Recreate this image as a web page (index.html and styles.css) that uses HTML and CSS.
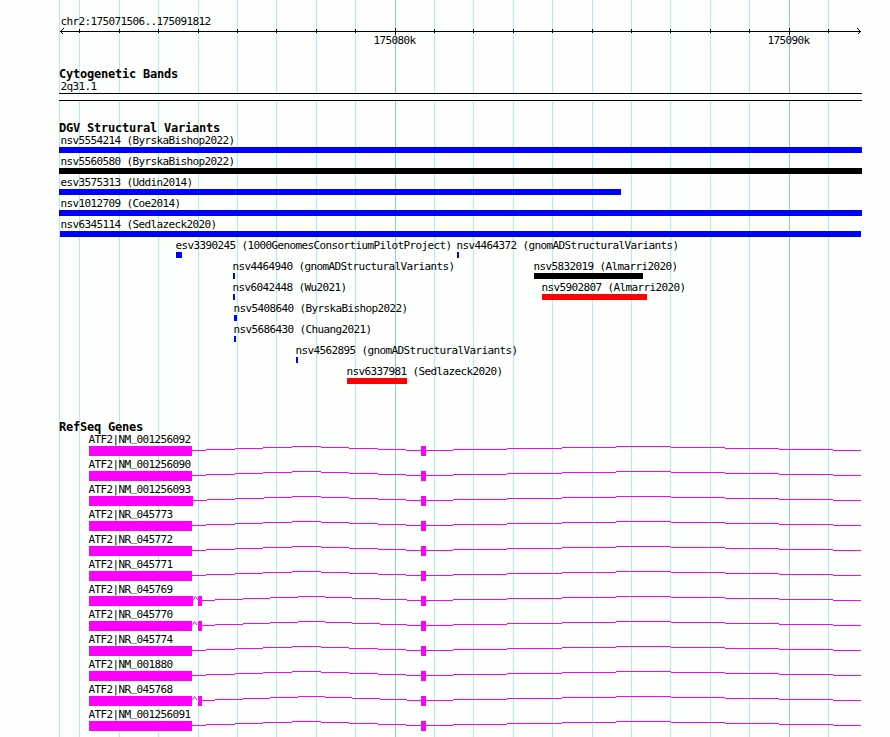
FILE: index.html
```
<!DOCTYPE html>
<html>
  <head>
    <meta charset="utf-8">
    <title>chr2:175071506..175091812</title>
    <link rel="stylesheet" href="styles.css">
  </head>
  <body>
    <div class="browser">
      <svg class="gridlines" width="890" height="737" shape-rendering="crispEdges">
        <path class="minor" d="M59.5 0V737M79.5 0V737M119.5 0V737M158.5 0V737M198.5 0V737M237.5 0V737M276.5 0V737M316.5 0V737M355.5 0V737M434.5 0V737M473.5 0V737M513.5 0V737M552.5 0V737M592.5 0V737M631.5 0V737M670.5 0V737M710.5 0V737M749.5 0V737M828.5 0V737"/>
        <path class="major" d="M395.5 0V737M789.5 0V737"/>
      </svg>

      <div class="tracks">
        <div class="ruler">
          <div class="label region">chr2:175071506..175091812</div>
          <svg class="scale" width="890" height="8" shape-rendering="crispEdges">
            <path d="M60 3.5H861M79.5 1V5M119.5 1V5M158.5 1V5M198.5 1V5M237.5 1V5M276.5 1V5M316.5 1V5M355.5 1V5M395.5 0V7M434.5 1V5M473.5 1V5M513.5 1V5M552.5 1V5M592.5 1V5M631.5 1V5M670.5 1V5M710.5 1V5M749.5 1V5M789.5 0V7M828.5 1V5"/>
            <path d="M63.5 0.5L60.5 3.5L63.5 6.5M857.5 0.5L860.5 3.5L857.5 6.5"/>
          </svg>
          <div class="ticks">
            <span class="label" style="margin-left:373px">175080k</span>
            <span class="label" style="margin-left:352px">175090k</span>
          </div>
        </div>

        <div class="track cyto">
          <div class="title">Cytogenetic Bands</div>
          <div class="label region">2q31.1</div>
          <div class="band"></div>
        </div>

        <div class="track variants">
          <div class="title">DGV Structural Variants</div>
          <div id="variants"></div>
        </div>

        <div class="track genes">
          <div class="title">RefSeq Genes</div>
          <div id="genes"></div>
        </div>
      </div>
    </div>
    <script src="tracks.js"></script>
  </body>
</html>
```
FILE: styles.css
```
body {
  margin: 0px;
  padding: 0px;
  background-color: #fdfffc;
  overflow: hidden;
}

.browser {
  position: relative;
  width: 890px;
  height: 737px;
  overflow: hidden;
}

.gridlines { position: absolute; top: 0px; left: 0px; }
.gridlines path { fill: none; stroke-width: 1px; }
.gridlines .minor { stroke: #afeeee; }
.gridlines .major { stroke: #87ceeb; }

.tracks { position: relative; padding-top: 15px; }

.label {
  height: 13px;
  line-height: 13px;
  font-family: "DejaVu Sans Mono", monospace;
  font-size: 11px;
  letter-spacing: -0.62px;
  text-indent: 0.5px;
  color: #000;
  white-space: pre;
}

.title {
  height: 13px;
  line-height: 13px;
  padding-left: 59px;
  font-family: "DejaVu Sans Mono", monospace;
  font-size: 12px;
  font-weight: bold;
  letter-spacing: -0.22px;
  color: #000;
  white-space: pre;
}

.region { padding-left: 60px; }

/* ruler */
.scale { display: block; }
.scale path { fill: none; stroke: #000; }
.ticks { display: flex; margin-top: -2px; }
.ticks .label { width: 42px; }
.ruler { height: 53px; }

/* cytoband */
.cyto { height: 54px; }
.cyto .label { margin-top: -1px; }
.band {
  box-sizing: border-box;
  width: 803px;
  height: 8px;
  margin-left: 59px;
  border-top: 1px solid #000;
  border-bottom: 1px solid #000;
  background-color: #fdfffc;
}

/* structural variants */
.variants { height: 299px; }
#variants { margin-top: -1px; }
.row { display: grid; height: 21px; }
.feature { grid-area: 1 / 1; }
.bar { height: 6px; }
.blue { background-color: #0000ff; }
.black { background-color: #000; }
.red { background-color: #ff0000; }

/* genes */
#genes { margin-top: -1px; }
.gene { height: 25px; }
.gene .label { padding-left: 88px; }
.gene .under { line-height: 0; vertical-align: 2px; }
.gene svg { display: block; }
.gene rect { fill: #ff00ff; }
.gene path { fill: none; stroke: #ff00ff; }
```
FILE: tracks.js
```
// each row: [name, label x, bar start, bar end, colour]
var variants = [
  [['nsv5554214 (ByrskaBishop2022)', 60, 59, 862, 'blue']],
  [['nsv5560580 (ByrskaBishop2022)', 60, 59, 862, 'black']],
  [['esv3575313 (Uddin2014)', 60, 59, 621, 'blue']],
  [['nsv1012709 (Coe2014)', 60, 59, 862, 'blue']],
  [['nsv6345114 (Sedlazeck2020)', 60, 60, 861, 'blue']],
  [['esv3390245 (1000GenomesConsortiumPilotProject)', 175, 176, 182, 'blue'],
   ['nsv4464372 (gnomADStructuralVariants)', 456, 457, 459, 'blue']],
  [['nsv4464940 (gnomADStructuralVariants)', 232, 233, 235, 'blue'],
   ['nsv5832019 (Almarri2020)', 533, 534, 643, 'black']],
  [['nsv6042448 (Wu2021)', 232, 233, 235, 'blue'],
   ['nsv5902807 (Almarri2020)', 541, 542, 647, 'red']],
  [['nsv5408640 (ByrskaBishop2022)', 233, 234, 237, 'blue']],
  [['nsv5686430 (Chuang2021)', 233, 234, 236, 'blue']],
  [['nsv4562895 (gnomADStructuralVariants)', 295, 296, 298, 'blue']],
  [['nsv6337981 (Sedlazeck2020)', 346, 347, 407, 'red']]
];

// [name, end of first exon, has small second exon]
var genes = [
  ['ATF2|NM_001256092', 192, false],
  ['ATF2|NM_001256090', 192, false],
  ['ATF2|NM_001256093', 193, false],
  ['ATF2|NR_045773', 192, false],
  ['ATF2|NR_045772', 192, false],
  ['ATF2|NR_045771', 192, false],
  ['ATF2|NR_045769', 193, true],
  ['ATF2|NR_045770', 192, true],
  ['ATF2|NR_045774', 192, false],
  ['ATF2|NM_001880', 192, false],
  ['ATF2|NR_045768', 192, true],
  ['ATF2|NM_001256091', 192, false]
];

// intron drawn as nine flat steps, rising to the middle one
function intron(xs) {
  var d = '';
  for (var i = 0; i < xs.length - 1; i++) {
    var y = 0.5 + Math.abs(4 - i);
    d += 'M' + xs[i] + ' ' + y + 'H' + xs[i + 1];
  }
  return d;
}

document.getElementById('variants').innerHTML = variants.map(function (row) {
  return '<div class="row">' + row.map(function (f) {
    return '<div class="feature">' +
      '<div class="label" style="margin-left:' + f[1] + 'px">' + f[0] + '</div>' +
      '<div class="bar ' + f[4] + '" style="margin-left:' + f[2] + 'px;width:' + (f[3] - f[2]) + 'px"></div>' +
      '</div>';
  }).join('') + '</div>';
}).join('');

document.getElementById('genes').innerHTML = genes.map(function (g) {
  var end = g[1];
  var left = [end, end + 14, 235, end == 193 ? 264 : 263, 292, 321, 349, 378, 406, 421];
  var extra = '';
  if (g[2]) {
    left = [202, 215, 243, 270, 298, 325, 352, 380, 407, 421];
    extra = '<rect x="198" y="0" width="4" height="10"/>' +
      '<path shape-rendering="auto" d="M' + (end + 0.5) + ' 4L' + (end + 2.5) + ' 0.5L' + (end + 5) + ' 4"/>';
  }
  var right = [426, 453, 507, 562, 616, 671, 725, 779, 833, 861];
  return '<div class="gene"><div class="label">' + g[0].replace('_', '<span class="under">_</span>') + '</div>' +
    '<svg width="890" height="10" shape-rendering="crispEdges">' +
    '<rect x="89" y="0" width="' + (end - 89) + '" height="10"/>' + extra +
    '<rect x="421" y="0" width="5" height="10"/>' +
    '<path d="' + intron(left) + intron(right) + '"/></svg></div>';
}).join('');
```
